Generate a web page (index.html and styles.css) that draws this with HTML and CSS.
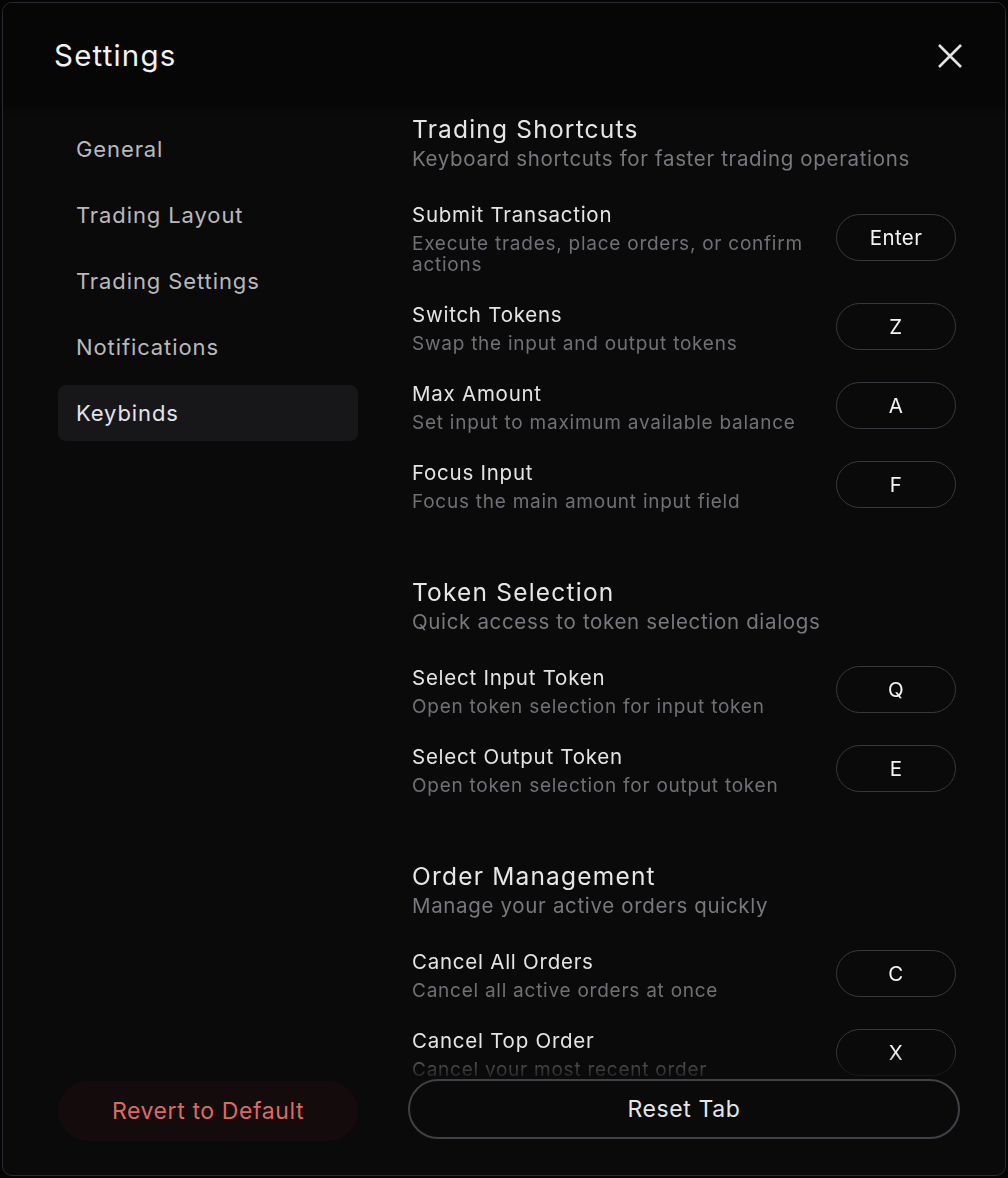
FILE: index.html
```html
<!DOCTYPE html>
<html>
<head>
<meta charset="utf-8">
<link rel="stylesheet" href="styles.css">
</head>
<body>
<div class="modal">
  <header class="header">
    <h1 class="title">Settings</h1>
    <button class="close" aria-label="Close">
      <svg width="24" height="24" viewBox="0 0 24 24"><path d="M1 1 L23 23 M23 1 L1 23" stroke="#e2e2e2" stroke-width="2.6" stroke-linecap="butt" fill="none"/></svg>
    </button>
  </header>
  <div class="body">
    <nav class="nav">
      <div class="nav-item">General</div>
      <div class="nav-item">Trading Layout</div>
      <div class="nav-item">Trading Settings</div>
      <div class="nav-item">Notifications</div>
      <div class="nav-item active">Keybinds</div>
    </nav>
    <div class="content">
      <section class="section">
        <h2 class="sec-title">Trading Shortcuts</h2>
        <p class="sec-desc">Keyboard shortcuts for faster trading operations</p>
        <div class="rows">
          <div class="row"><div class="row-text"><div class="row-title">Submit Transaction</div><div class="row-desc">Execute trades, place orders, or confirm actions</div></div><div class="key">Enter</div></div>
          <div class="row"><div class="row-text"><div class="row-title">Switch Tokens</div><div class="row-desc">Swap the input and output tokens</div></div><div class="key">Z</div></div>
          <div class="row"><div class="row-text"><div class="row-title">Max Amount</div><div class="row-desc">Set input to maximum available balance</div></div><div class="key">A</div></div>
          <div class="row"><div class="row-text"><div class="row-title">Focus Input</div><div class="row-desc">Focus the main amount input field</div></div><div class="key">F</div></div>
        </div>
      </section>
      <section class="section">
        <h2 class="sec-title">Token Selection</h2>
        <p class="sec-desc">Quick access to token selection dialogs</p>
        <div class="rows">
          <div class="row"><div class="row-text"><div class="row-title">Select Input Token</div><div class="row-desc">Open token selection for input token</div></div><div class="key">Q</div></div>
          <div class="row"><div class="row-text"><div class="row-title">Select Output Token</div><div class="row-desc">Open token selection for output token</div></div><div class="key">E</div></div>
        </div>
      </section>
      <section class="section">
        <h2 class="sec-title">Order Management</h2>
        <p class="sec-desc">Manage your active orders quickly</p>
        <div class="rows">
          <div class="row"><div class="row-text"><div class="row-title">Cancel All Orders</div><div class="row-desc">Cancel all active orders at once</div></div><div class="key">C</div></div>
          <div class="row"><div class="row-text"><div class="row-title">Cancel Top Order</div><div class="row-desc">Cancel your most recent order</div></div><div class="key">X</div></div>
        </div>
      </section>
    </div>
  </div>
  <footer class="footer">
    <button class="revert">Revert to Default</button>
    <button class="reset">Reset Tab</button>
  </footer>
</div>
</body>
</html>
```

FILE: styles.css
```css
* { box-sizing: border-box; }
html, body { margin: 0; padding: 0; background: #050506; }
body {
  padding: 2px;
  font-family: Inter, "Noto Sans", "Liberation Sans", sans-serif;
  height: 1178px;
  overflow: hidden;
}
.modal {
  width: 1004px;
  height: 1174px;
  border: 1px solid #2a2a30;
  border-radius: 10px;
  background: #0a0a0a;
  display: flex;
  flex-direction: column;
  overflow: hidden;
}
.header {
  height: 104px;
  flex: none;
  display: flex;
  align-items: center;
  justify-content: space-between;
  padding: 0 43px 0 51px;
  background: #060606;
  box-shadow: 0 1px 6px rgba(0,0,0,0.4);
}
.title {
  margin: 0;
  font-size: 29.5px;
  font-weight: 400;
  color: #f2f2f2;
  letter-spacing: 1.2px;
}
.close {
  background: none;
  border: none;
  padding: 0;
  width: 24px;
  height: 24px;
  display: flex;
  margin-top: 2px;
}
.body {
  flex: 1;
  min-height: 0;
  display: grid;
  grid-template-columns: 300px 552px;
  column-gap: 50px;
  padding-left: 55px;
}
.nav {
  padding-top: 14px;
  display: flex;
  flex-direction: column;
  gap: 10px;
}
.nav-item {
  height: 56px;
  display: flex;
  align-items: center;
  padding-left: 18px;
  border-radius: 8px;
  font-size: 22px;
  letter-spacing: 0.9px;
  color: #b9b9bd;
}
.nav-item.active {
  background: #17171a;
  color: #e3e3e9;
}
.content {
  padding: 7px 4px 0 4px;
  overflow: hidden;
  -webkit-mask-image: linear-gradient(to bottom, #000 0, #000 calc(100% - 24px), rgba(0,0,0,0.25) 100%);
  mask-image: linear-gradient(to bottom, #000 0, #000 calc(100% - 24px), rgba(0,0,0,0.25) 100%);
}
.section + .section { margin-top: 65px; }
.sec-title {
  margin: 0;
  font-size: 24.5px;
  line-height: 30px;
  font-weight: 400;
  letter-spacing: 1.2px;
  color: #e6e6e8;
}
.sec-desc {
  margin: 2px 0 0;
  font-size: 20.5px;
  line-height: 26px;
  letter-spacing: 0.66px;
  color: #78787e;
}
.rows {
  margin-top: 31px;
  display: flex;
  flex-direction: column;
  gap: 28px;
}
.row {
  display: flex;
  align-items: center;
  justify-content: space-between;
}
.row-text { width: 400px; }
.row-title {
  font-size: 20.5px;
  line-height: 24px;
  letter-spacing: 0.75px;
  color: #e4e4e6;
}
.row-desc {
  margin-top: 6px;
  font-size: 19px;
  line-height: 21px;
  letter-spacing: 0.75px;
  color: #707076;
}
.key {
  width: 120px;
  height: 47px;
  margin-bottom: 4px;
  border: 1.5px solid #38383e;
  border-radius: 24px;
  display: flex;
  align-items: center;
  justify-content: center;
  font-size: 20.5px;
  letter-spacing: 0.4px;
  color: #f4f4f4;
}
.footer {
  flex: none;
  height: 98px;
  display: grid;
  grid-template-columns: 300px 552px;
  column-gap: 50px;
  padding-left: 55px;
  padding-top: 2px;
}
.revert, .reset {
  font-family: inherit;
  font-size: 23px;
  letter-spacing: 0.6px;
  height: 60px;
  border-radius: 30px;
  cursor: pointer;
}
.revert {
  background: #140c0c;
  border: none;
  color: #dd6a60;
  margin-top: 2px;
}
.reset {
  background: transparent;
  border: 2px solid #404046;
  color: #e6e6e6;
}
```
